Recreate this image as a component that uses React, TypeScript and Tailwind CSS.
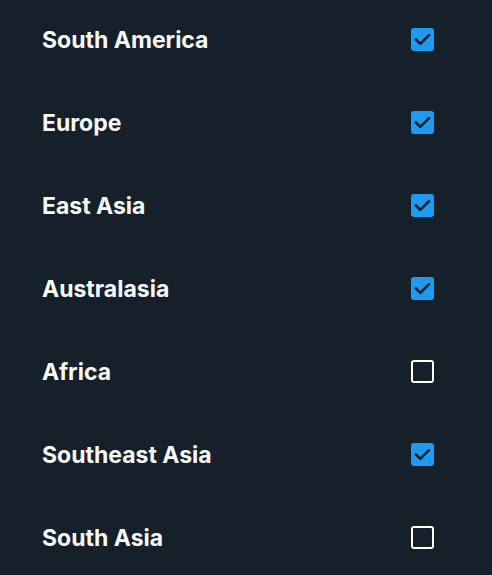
const regions = [
  { name: 'South America', checked: true },
  { name: 'Europe', checked: true },
  { name: 'East Asia', checked: true },
  { name: 'Australasia', checked: true },
  { name: 'Africa', checked: false },
  { name: 'Southeast Asia', checked: true },
  { name: 'South Asia', checked: false },
];

function Checkbox({ checked }: { checked: boolean }) {
  if (!checked) {
    return <div className="mb-[2px] h-[23px] w-[23px] rounded-[3px] border-[2.5px] border-white" />;
  }
  return (
    <div className="mb-[2px] flex h-[23px] w-[23px] items-center justify-center rounded-[3px] bg-[#1d9bf0]">
      <svg viewBox="0 0 24 24" className="h-[21px] w-[21px]" fill="none">
        <path d="M4.5 12l5 5L19.5 7" stroke="#15202b" strokeWidth="3" strokeLinecap="round" strokeLinejoin="round" />
      </svg>
    </div>
  );
}

export default function App() {
  return (
    <div className="min-h-screen w-full bg-[#15202b]" style={{ fontFamily: 'Inter, "Noto Sans", sans-serif' }}>
      <div className="-mt-[1px]">
        {regions.map((r) => (
          <div key={r.name} className="flex h-[83px] items-center justify-between pl-[42px] pr-[58px]">
            <span className="text-[23px] font-bold text-[#f7f9f9]">{r.name}</span>
            <Checkbox checked={r.checked} />
          </div>
        ))}
      </div>
    </div>
  );
}
